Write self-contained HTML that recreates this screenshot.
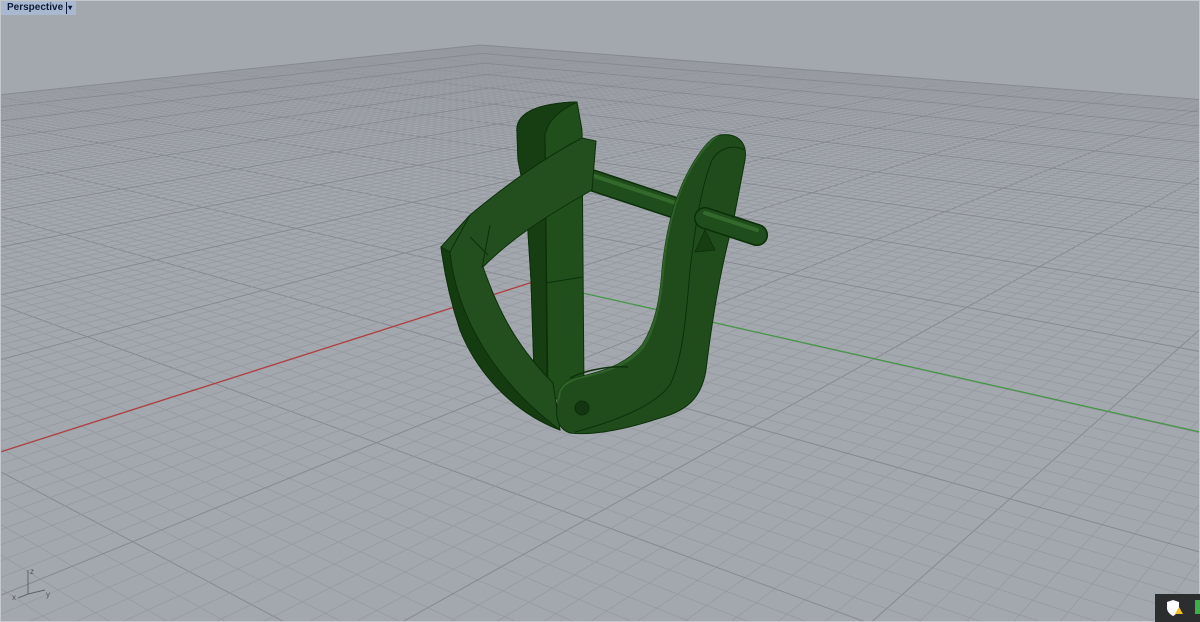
<!DOCTYPE html>
<html><head><meta charset="utf-8"><style>
html,body{margin:0;padding:0;width:1200px;height:622px;overflow:hidden;background:#a3a8ae}
#v{position:absolute;left:0;top:0;display:block}
.tab{position:absolute;left:1px;top:1px;height:14px;background:#a8b9cf;font:bold 10px "Liberation Sans",sans-serif;color:#0d1b3a;line-height:14px;padding:0 4px 0 6px}
.tab span{display:inline-block;border-left:1px solid #0d1b3a;margin-left:3px;padding-left:1px;font-size:8px;line-height:12px}
.br{position:absolute;left:1155px;top:594px;width:45px;height:28px;background:#2c2d2e;overflow:hidden}
.br svg{display:block}
</style></head><body>
<svg id="v" width="1200" height="622" xmlns="http://www.w3.org/2000/svg">
<rect x="0" y="0" width="1200" height="622" fill="#a3a8ae"/>
<g id="grid"></g>
<line x1="533" y1="282" x2="0" y2="452" stroke="#b04040" stroke-width="1.3"/>
<line x1="583" y1="293" x2="1200" y2="432" stroke="#3d9a3d" stroke-width="1.1"/>
<!-- back post -->
<path d="M517,132 C515,112 540,103 577,102 L582,130 L584,395 L535,402 L531,280 L526,200 L518,160 Z" fill="#214f1c" stroke="#0c300a" stroke-width="1"/>
<path d="M517,132 C515,112 540,103 577,102 C560,110 548,120 545,135 L548,395 L535,402 L531,280 L526,200 L518,160 Z" fill="#173d13" stroke="#0c300a" stroke-width="1"/>
<path d="M545,135 L547,398" stroke="#0c300a" stroke-width="1"/>
<path d="M546,283 L583,277" stroke="#0c300a" stroke-width="1"/>
<!-- pin behind -->
<line x1="555" y1="168" x2="757" y2="235" stroke="#0c300a" stroke-width="22" stroke-linecap="round"/>
<line x1="555" y1="168" x2="757" y2="235" stroke="#1f4d1b" stroke-width="19" stroke-linecap="round"/>
<line x1="555" y1="163" x2="757" y2="230" stroke="#336a2c" stroke-width="4" stroke-linecap="round"/>
<!-- left arm with crossbar -->
<path d="M441,247 L470,215 C500,190 540,160 582,138 L596,141 L592,190 L580,197 C540,220 510,240 483,267 C495,300 510,340 553,383 L560,430 C520,415 480,380 460,330 C450,300 444,270 441,247 Z" fill="#224f1d" stroke="#0c300a" stroke-width="1"/>
<path d="M441,247 L450,252 C455,300 480,370 560,430 C520,415 480,380 460,330 C450,300 444,270 441,247 Z" fill="#153b11" stroke="#0c300a" stroke-width="1"/>
<path d="M450,252 L470,215 M470,237 L488,255 M490,225 L482,268" stroke="#0c300a" stroke-width="1" fill="none"/>
<!-- right arm -->
<path d="M720,135 C735,133 748,140 745,160 L733,223 C720,270 712,320 706,370 C702,395 690,410 660,418 C630,428 595,436 570,433 C560,430 555,420 557,405 C557,390 562,382 575,378 C600,372 625,366 642,345 C655,325 660,300 662,270 C666,230 675,190 697,157 C705,145 712,137 720,135 Z" fill="#1f4c1a" stroke="#0c300a" stroke-width="1"/>
<path d="M720,135 C712,140 703,152 697,160 C675,195 668,232 664,272 C662,300 656,330 644,348 C628,368 600,374 576,380 C565,384 560,390 560,398 L557,405 C557,390 562,382 575,378 C600,372 625,366 642,345 C655,325 660,300 662,270 C666,230 675,190 697,157 C705,145 712,137 720,135 Z" fill="#2e6228"/>
<path d="M745,150 C730,143 718,150 712,160 C700,190 695,230 690,270 C686,320 682,360 670,385 C655,405 620,420 575,432" stroke="#0c300a" stroke-width="1" fill="none"/>
<path d="M570,378 C590,368 615,366 628,367" stroke="#0c300a" stroke-width="1.5" fill="none"/>
<circle cx="582" cy="408" r="7" fill="#133610" stroke="#0c300a"/>
<!-- pin front -->
<line x1="705" y1="218" x2="757" y2="235" stroke="#0c300a" stroke-width="22" stroke-linecap="round"/>
<line x1="705" y1="218" x2="757" y2="235" stroke="#1f4d1b" stroke-width="19" stroke-linecap="round"/>
<line x1="705" y1="213" x2="757" y2="230" stroke="#336a2c" stroke-width="4" stroke-linecap="round"/>
<path d="M705,230 L715,250 L695,252 Z" fill="#173d13" stroke="#0c300a" stroke-width="0.8"/>
<!-- axis icon -->
<g stroke="#606468" stroke-width="1" fill="none"><path d="M28,570 L28,594 L45,590 M28,594 L18,598"/></g>
<text x="30" y="574" font-family="Liberation Sans,sans-serif" font-size="8" fill="#555">z</text>
<text x="46" y="597" font-family="Liberation Sans,sans-serif" font-size="8" fill="#555">y</text>
<text x="12" y="600" font-family="Liberation Sans,sans-serif" font-size="8" fill="#555">x</text>
<rect x="0.5" y="0.5" width="1199" height="621" fill="none" stroke="#c4c8cc" stroke-width="1"/>
</svg>
<div class="tab">Perspective<span>▾</span></div>
<div class="br"><svg width="45" height="28"><path d="M12,8 L18,6 L24,8 L24,14 C24,19 18,22 18,22 C18,22 12,19 12,14 Z" fill="#fff"/><path d="M20,20 L24,13 L28,20 Z" fill="#f0c020"/><rect x="40" y="6" width="5" height="14" fill="#3fae4a"/></svg></div>
<script>
(function(){
var VPu=[1656,-77],VPv=[-1020,-69],O=[533,282],a=0.01103,b=0.009;
function P(u,v){var d=a*u+b*v+1;return [(a*u*VPu[0]+b*v*VPv[0]+O[0])/d,(a*u*VPu[1]+b*v*VPv[1]+O[1])/d];}
var g=document.getElementById('grid'),s='',eps=0.08;
for(var i=-100;i<=100;i++){
 var maj=(i%10===0);
 var col=maj?'#868a90':'#969aa0',w=maj?1:0.8;
 var u0=Math.max(-100,(eps-1-b*i)/a);
 if(u0<100){var p=P(u0,i),q=P(100,i);s+='<line x1="'+p[0]+'" y1="'+p[1]+'" x2="'+q[0]+'" y2="'+q[1]+'" stroke="'+col+'" stroke-width="'+w+'"/>';}
 var v0=Math.max(-100,(eps-1-a*i)/b);
 if(v0<100){var p=P(i,v0),q=P(i,100);s+='<line x1="'+p[0]+'" y1="'+p[1]+'" x2="'+q[0]+'" y2="'+q[1]+'" stroke="'+col+'" stroke-width="'+w+'"/>';}
}
g.innerHTML=s;
})();
</script>
</body></html>
